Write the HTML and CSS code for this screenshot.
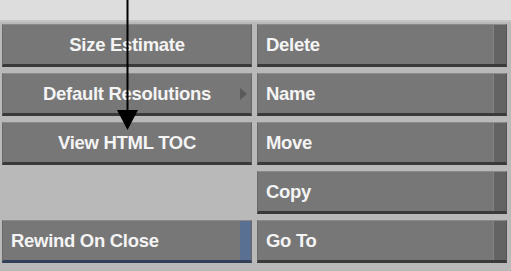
FILE: index.html
```html
<!DOCTYPE html>
<html lang="en">
<head>
    <meta charset="UTF-8">
    <title>Menu</title>
    <link rel="stylesheet" href="styles.css">
</head>
<body>
    <div class="top-strip"></div>
    <div class="grid">
        <button class="btn">Size Estimate</button>
        <button class="btn side">Delete</button>
        <button class="btn submenu">Default Resolutions<span class="tri"></span></button>
        <button class="btn side">Name</button>
        <button class="btn">View HTML TOC</button>
        <button class="btn side">Move</button>
        <div class="empty"></div>
        <button class="btn side">Copy</button>
        <button class="btn toggle">Rewind On Close</button>
        <button class="btn side">Go To</button>
    </div>
    <svg class="pointer" width="511" height="271" viewBox="0 0 511 271">
        <line x1="127.5" y1="0" x2="127.5" y2="112" stroke="#000" stroke-width="2"/>
        <polygon points="117,110 138,110 127.5,130" fill="#000"/>
    </svg>
</body>
</html>
```

FILE: styles.css
```css
body {
    margin: 0;
    padding: 0;
    width: 511px;
    height: 271px;
    overflow: hidden;
    background: #b9b9b9;
    font-family: 'Liberation Sans', Arial, sans-serif;
    position: relative;
}
.top-strip {
    height: 20px;
    background: #dddddd;
    border-bottom: 2px solid #c4c4c4;
}
.grid {
    display: grid;
    grid-template-columns: 250px 250px;
    grid-auto-rows: 43px;
    column-gap: 5px;
    row-gap: 6px;
    padding: 2px 0 0 2px;
}
.btn {
    margin: 0;
    padding: 0;
    box-sizing: border-box;
    display: flex;
    align-items: center;
    justify-content: center;
    background: #777777;
    color: #f4f4f4;
    font-family: inherit;
    font-size: 18.5px;
    font-weight: bold;
    letter-spacing: -0.3px;
    border: none;
    border-top: 1px solid #8a8a8a;
    border-left: 1px solid #6a6a6a;
    border-right: 1px solid #686868;
    border-bottom: 3px solid #3a3a3a;
    position: relative;
}
.side {
    justify-content: flex-start;
    padding-left: 8px;
    box-shadow: inset -12px 0 0 #636363, inset -13px 0 0 #838383;
    border-right: 1px solid #555;
}
.toggle {
    justify-content: flex-start;
    padding-left: 8px;
    box-shadow: inset -11px 0 0 #5a7092;
    border-bottom-color: #33405a;
}
.submenu .tri {
    position: absolute;
    right: 4px;
    top: 14px;
    width: 0;
    height: 0;
    border-top: 6px solid transparent;
    border-bottom: 6px solid transparent;
    border-left: 7px solid #5a5a5a;
}
.pointer {
    position: absolute;
    left: 0;
    top: 0;
    pointer-events: none;
}
```
